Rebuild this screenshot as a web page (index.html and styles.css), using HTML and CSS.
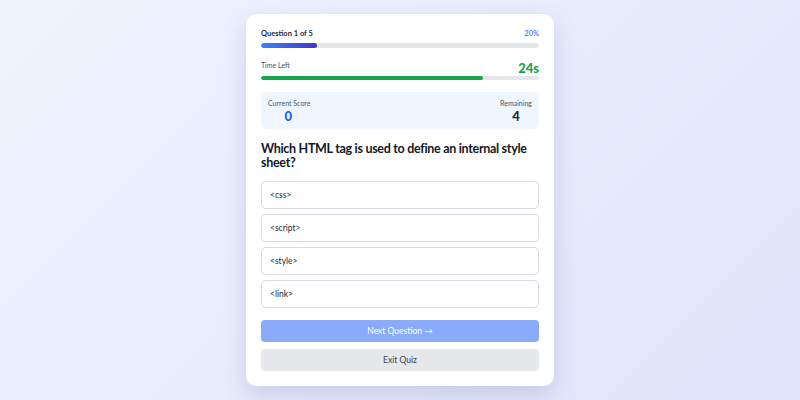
FILE: index.html
```html
<!DOCTYPE html>
<html lang="en">
<head>
  <meta charset="UTF-8">
  <title>Quiz</title>
  <link rel="stylesheet" href="styles.css">
</head>
<body>
  <div class="quiz-card">
    <div class="progress-head">
      <p class="progress-label">Question 1 of 5</p>
      <p class="progress-pct">20%</p>
    </div>
    <div class="bar">
      <div class="bar-fill progress-fill" style="width: 20%"></div>
    </div>

    <div class="timer-head">
      <p class="timer-label">Time Left</p>
      <p class="timer-val">24s</p>
    </div>
    <div class="bar timer-bar">
      <div class="bar-fill timer-fill" style="width: 80%"></div>
    </div>

    <div class="stats">
      <div class="stat">
        <p class="stat-label">Current Score</p>
        <p class="stat-val score">0</p>
      </div>
      <div class="stat stat-right">
        <p class="stat-label">Remaining</p>
        <p class="stat-val">4</p>
      </div>
    </div>

    <h2 class="question">Which HTML tag is used to define an internal style sheet?</h2>

    <div class="options">
      <button class="option">&lt;css&gt;</button>
      <button class="option">&lt;script&gt;</button>
      <button class="option">&lt;style&gt;</button>
      <button class="option">&lt;link&gt;</button>
    </div>

    <button class="btn btn-next" disabled>Next Question →</button>
    <button class="btn btn-exit">Exit Quiz</button>
  </div>
</body>
</html>
```

FILE: styles.css
```css
* {
  box-sizing: border-box;
  font-family: Lato, "Open Sans", sans-serif;
}

body {
  margin: 0;
  height: 400px;
  background: linear-gradient(135deg, #f0f4fe 0%, #e6ebfc 60%, #dfe5fb 100%);
}

p {
  margin: 0;
}

.quiz-card {
  width: 308px;
  margin: 14px auto 0;
  padding: 15px;
  background-color: #fff;
  border-radius: 10px;
  box-shadow: 0 10px 25px rgba(90, 100, 170, 0.22);
}

.progress-head,
.timer-head {
  display: flex;
  justify-content: space-between;
}

.progress-head {
  line-height: 10px;
}

.progress-label {
  font-size: 7.5px;
  font-weight: 700;
  color: #1f2937;
}

.progress-pct {
  font-size: 7.5px;
  color: #2563eb;
}

.bar {
  height: 5px;
  margin-top: 4px;
  background-color: #e5e7eb;
  border-radius: 3px;
  overflow: hidden;
}

.bar-fill {
  height: 100%;
  border-radius: 3px;
}

.progress-fill {
  background: linear-gradient(90deg, #3b82f6, #4338ca);
}

.timer-head {
  margin-top: 12px;
  align-items: flex-end;
}

.timer-label {
  font-size: 7px;
  color: #4b5563;
  line-height: 10px;
  margin-bottom: 6px;
}

.timer-val {
  font-size: 13px;
  font-weight: 900;
  color: #16a34a;
  line-height: 16px;
}

.timer-bar {
  height: 4px;
  margin-top: 0;
}

.timer-fill {
  background-color: #16a34a;
}

.stats {
  display: flex;
  justify-content: space-between;
  margin-top: 12px;
  padding: 6px 7px 5px;
  background-color: #eff6ff;
  border-radius: 6px;
}

.stat {
  text-align: center;
}

.stat-label {
  font-size: 7px;
  line-height: 10px;
  color: #4b5563;
}

.stat-val {
  font-size: 13px;
  font-weight: 900;
  line-height: 16px;
  color: #1f2937;
}

.stat-val.score {
  color: #2563eb;
  margin-right: 2px;
}

.question {
  margin: 13px 0 0;
  font-size: 12.5px;
  line-height: 14px;
  letter-spacing: -0.3px;
  font-weight: 700;
  color: #111827;
}

.options {
  display: flex;
  flex-direction: column;
  gap: 5px;
  margin-top: 11px;
}

.option {
  height: 28px;
  padding: 0 8px;
  text-align: left;
  font-size: 8.5px;
  color: #1f2937;
  background-color: #fff;
  border: 1.5px solid #d9dbe4;
  border-radius: 5px;
}

.btn {
  display: block;
  width: 100%;
  height: 22px;
  border: none;
  border-radius: 4px;
  font-size: 8.5px;
}

.btn-next {
  margin-top: 12px;
  background-color: #89abfa;
  color: #fff;
}

.btn-exit {
  margin-top: 7px;
  background-color: #e5e7eb;
  color: #374151;
}
```
